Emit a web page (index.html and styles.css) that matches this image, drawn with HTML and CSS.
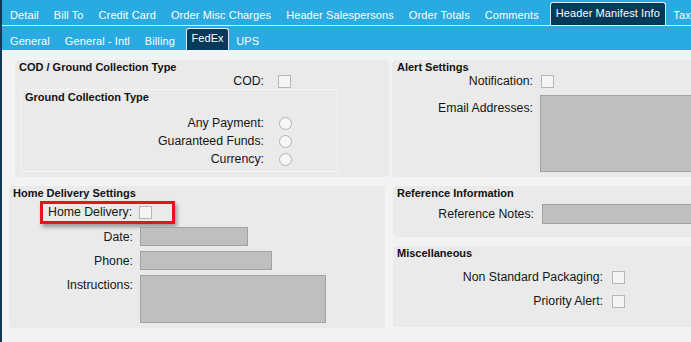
FILE: index.html
```html
<html>
<head>
<title>Header Manifest Info</title>
<meta http-equiv="Content-Type" content="text/html; charset=utf-8" />
<link rel="stylesheet" href="styles.css">
</head>
<body>
<div class="shell">

    <!-- abas principais -->
    <div class="tabs tabs-main">
        <span class="tab">Detail</span>
        <span class="tab">Bill To</span>
        <span class="tab">Credit Card</span>
        <span class="tab">Order Misc Charges</span>
        <span class="tab">Header Salespersons</span>
        <span class="tab">Order Totals</span>
        <span class="tab">Comments</span>
        <span class="tab active">Header Manifest Info</span>
        <span class="tab">Tax</span>
    </div>

    <!-- sub abas -->
    <div class="tabs tabs-sub">
        <span class="tab">General</span>
        <span class="tab">General - Intl</span>
        <span class="tab">Billing</span>
        <span class="tab active">FedEx</span>
        <span class="tab">UPS</span>
    </div>

    <div class="content">
        <div class="row-top">
            <section class="panel cod">
                <div class="panel-title">COD / Ground Collection Type</div>
                <div class="field">
                    <label class="lbl">COD:</label>
                    <input type="checkbox" class="check" />
                </div>
                <div class="group">
                    <div class="panel-title">Ground Collection Type</div>
                    <div class="radios">
                        <div class="field radio-row">
                            <label class="lbl">Any Payment:</label>
                            <input type="radio" name="gct" class="radio" />
                        </div>
                        <div class="field radio-row">
                            <label class="lbl">Guaranteed Funds:</label>
                            <input type="radio" name="gct" class="radio" />
                        </div>
                        <div class="field radio-row">
                            <label class="lbl">Currency:</label>
                            <input type="radio" name="gct" class="radio" />
                        </div>
                    </div>
                </div>
            </section>

            <section class="panel alert">
                <div class="panel-title">Alert Settings</div>
                <div class="field">
                    <label class="lbl">Notification:</label>
                    <input type="checkbox" class="check" />
                </div>
                <div class="field field-top email">
                    <label class="lbl">Email Addresses:</label>
                    <textarea class="box email-box"></textarea>
                </div>
            </section>
        </div>

        <div class="row-bottom">
            <section class="panel home">
                <div class="panel-title">Home Delivery Settings</div>
                <div class="highlight">
                    <label class="lbl">Home Delivery:</label>
                    <input type="checkbox" class="check" />
                </div>
                <div class="field date">
                    <label class="lbl">Date:</label>
                    <input type="text" class="box date-box" />
                </div>
                <div class="field phone">
                    <label class="lbl">Phone:</label>
                    <input type="text" class="box phone-box" />
                </div>
                <div class="field field-top instructions">
                    <label class="lbl">Instructions:</label>
                    <textarea class="box instr-box"></textarea>
                </div>
            </section>

            <div class="col-right">
                <section class="panel ref">
                    <div class="panel-title">Reference Information</div>
                    <div class="field notes">
                        <label class="lbl">Reference Notes:</label>
                        <input type="text" class="box notes-box" />
                    </div>
                </section>
                <section class="panel misc">
                    <div class="panel-title">Miscellaneous</div>
                    <div class="field misc-row">
                        <label class="lbl">Non Standard Packaging:</label>
                        <input type="checkbox" class="check" />
                    </div>
                    <div class="field misc-row">
                        <label class="lbl">Priority Alert:</label>
                        <input type="checkbox" class="check" />
                    </div>
                </section>
            </div>
        </div>
    </div>

</div>
</body>
</html>
```

FILE: styles.css
```css
html, body {
    margin: 0;
    height: 100%;
    overflow: hidden;
}
body {
    font-family: "Liberation Sans", Arial, sans-serif;
    font-size: 12.3px;
    background-color: #f3f3f4;
    color: #161616;
}
.shell {
    width: 689px;
    min-height: 342px;
    border-left: 2px solid #12395a;
    overflow: hidden;
}

/* abas */
.tabs {
    display: flex;
    background-color: #29abe2;
    white-space: nowrap;
    padding-left: 0.5px;
}
.tabs-main {
    height: 25px;
    border-bottom: 1px solid #e9f6fc;
}
.tabs-sub {
    height: 24px;
}
.tab {
    color: #fff;
    font-size: 11px;
    line-height: 13px;
    padding: 9px 7.5px 3px;
    letter-spacing: 0.1px;
}
.tabs-sub .tab {
    padding-bottom: 2px;
}
.tab.active {
    background-color: #033a5a;
    border: 1px solid #d6eef9;
    border-bottom: none;
    border-radius: 3px 3px 0 0;
    margin: 2px 0 0 3.5px;
    padding: 4px 5px 5px;
}
.tabs-sub .tab.active {
    margin-left: 4px;
    padding: 3px 4px 5px;
}

/* area de conteudo */
.content {
    padding-top: 10px;
}
.row-top {
    display: flex;
    gap: 3px;
    padding-left: 13px;
    margin-right: -80px;
}
.row-bottom {
    display: flex;
    gap: 8px;
    padding-left: 7px;
    margin-top: 9px;
    margin-right: -80px;
}
.col-right {
    flex: 1;
    display: flex;
    flex-direction: column;
    gap: 9px;
}
.panel {
    background-color: #eaeaea;
    border-radius: 4px;
    padding: 0 4px;
    box-sizing: border-box;
}
.panel-title {
    font-weight: bold;
    font-size: 11px;
    line-height: 13px;
    padding-top: 1px;
    color: #111;
}

.field {
    display: flex;
    align-items: center;
}
.field-top {
    align-items: flex-start;
}
.lbl {
    text-align: right;
    line-height: 14px;
    flex: none;
}

.check {
    appearance: none;
    -webkit-appearance: none;
    width: 13px;
    height: 13px;
    margin: 0;
    border: 1px solid #b7b7b7;
    background-color: #f4f4f4;
    box-sizing: border-box;
}
.radio {
    appearance: none;
    -webkit-appearance: none;
    width: 13px;
    height: 13px;
    margin: 0;
    border: 1px solid #b3b3b3;
    border-radius: 50%;
    background-color: #f6f6f6;
    box-sizing: border-box;
}
.box {
    background-color: #bfbfbf;
    border: 1px solid #a2a2a2;
    margin: 0;
    padding: 0;
    box-sizing: border-box;
    resize: none;
    font: inherit;
}

/* COD */
.cod {
    width: 374px;
    height: 117px;
}
.cod > .field .lbl {
    width: 245px;
    margin-right: 14px;
}
.group {
    margin: 1px 47px 0 1px;
    height: 83px;
    border: 1px solid #f4f4f4;
    border-radius: 2px;
    padding: 0 4px;
    box-sizing: border-box;
}
.radios {
    margin-top: 10px;
}
.radio-row {
    height: 18px;
}
.radio-row .lbl {
    width: 239px;
    margin-right: 15px;
}

/* alertas */
.alert {
    flex: 1;
    height: 117px;
    padding: 0 5px;
}
.alert .field .lbl {
    width: 136px;
    margin-right: 8px;
}
.alert .email {
    margin-top: 7px;
}
.alert .email .lbl {
    margin-right: 7px;
    padding-top: 6px;
}
.email-box {
    width: 170px;
    height: 77px;
}

/* entrega residencial */
.home {
    width: 376px;
    height: 142px;
}
.home .field .lbl {
    width: 120px;
    margin-right: 7px;
}
.highlight {
    display: inline-flex;
    align-items: center;
    margin: 1px 0 0 27px;
    height: 23px;
    padding: 0 20px 0 5px;
    border: 3px solid #e8141b;
    box-sizing: border-box;
    box-shadow: 2px 3px 4px rgba(0, 0, 0, 0.35);
}
.highlight .lbl {
    line-height: 17px;
    margin-right: 7px;
}
.date {
    margin-top: 3px;
}
.phone, .instructions {
    margin-top: 5px;
}
.instructions .lbl {
    padding-top: 3px;
}
.date-box {
    width: 108px;
    height: 19px;
}
.phone-box {
    width: 132px;
    height: 19px;
}
.instr-box {
    width: 186px;
    height: 48px;
}

/* referencia */
.ref {
    height: 51px;
}
.notes {
    margin-top: 4px;
}
.notes .lbl {
    width: 137px;
    margin-right: 8px;
}
.notes-box {
    width: 170px;
    height: 20px;
}

/* diversos */
.misc {
    height: 81px;
}
.misc-row {
    height: 14px;
    margin-top: 10px;
}
.misc-row:first-of-type {
    margin-top: 7px;
}
.misc-row .lbl {
    width: 206px;
    margin-right: 9px;
}
```
